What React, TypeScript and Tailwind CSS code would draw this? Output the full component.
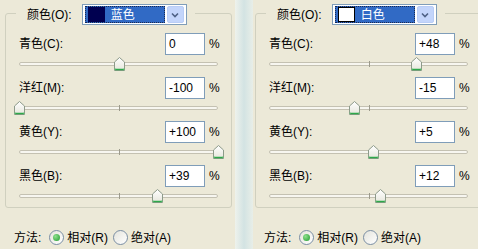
import React from 'react';

const FONT = '"Liberation Sans", "Noto Sans CJK SC", sans-serif';

interface Row {
  label: string;
  value: number;
}

interface PanelProps {
  colorName: string;
  swatch: string;
  rows: Row[];
  offset: string;
}

const fmt = (v: number) => (v > 0 ? `+${v}` : `${v}`);

function Thumb() {
  return (
    <svg width="11" height="14" viewBox="0 0 11 14" className="block">
      <defs>
        <linearGradient id="thumbFill" x1="0" y1="0" x2="0" y2="1">
          <stop offset="0" stopColor="#ffffff" />
          <stop offset="1" stopColor="#e6e6dc" />
        </linearGradient>
      </defs>
      <path d="M0.5 5 L5.5 0.5 L10.5 5 L10.5 13.5 L0.5 13.5 Z" fill="url(#thumbFill)" stroke="#8d9a8a" />
      <path d="M1 12.5 L10 12.5" stroke="#2ea84a" strokeWidth="1.5" />
      <path d="M1 11.5 L1 13 M10 11.5 L10 13" stroke="#6cc27a" strokeWidth="1" />
    </svg>
  );
}

function Slider({ value, tick }: { value: number; tick: boolean }) {
  const pos = ((value + 100) / 200) * 199;
  return (
    <div className="relative h-[14px] w-[210px] ml-[8px]">
      <div className="absolute left-[5px] top-[5px] h-[4px] w-[199px] rounded-full border border-[#c4c1b2] bg-[#f7f6f0]" />
      {tick && <div className="absolute left-[105px] top-[4px] h-[6px] w-px bg-[#9c9a8c]" />}
      <div className="absolute top-0" style={{ left: `${pos}px` }}>
        <Thumb />
      </div>
    </div>
  );
}

function Radio({ checked }: { checked: boolean }) {
  return (
    <span className="flex h-[15px] w-[15px] items-center justify-center rounded-full border border-[#7a8ea4] bg-linear-to-br from-[#e4e4dc] to-white">
      {checked && <span className="h-[7px] w-[7px] rounded-full bg-[radial-gradient(circle_at_35%_35%,#8ee08e,#1f9c2f)]" />}
    </span>
  );
}

function Panel({ colorName, swatch, rows, offset }: PanelProps) {
  return (
    <div className={`w-[235px] shrink-0 bg-[#ece9d8] pt-[13px] ${offset}`}>
      <div className="relative w-[227px] rounded-[3px] border border-[#d0d0bf] pt-[19px] pb-[4px]">
        <div className="absolute left-[10px] top-[-10px] flex items-center bg-[#ece9d8] pl-[11px] pr-[8px]">
          <span className="text-[12px] leading-[14px] text-black">颜色(O):</span>
          <div className="ml-[10px] flex h-[21px] w-[105px] items-center border border-[#7f9db9] bg-white px-[1px]">
            <div className="ml-[1px] flex h-[17px] w-[80px] items-center bg-[#316ac5] outline-1 outline-dotted outline-[#1a2a50] -outline-offset-1">
              <span className={`ml-[3px] h-[15px] w-[17px] ${swatch}`} />
              <span className="ml-[6px] text-[12px] leading-[14px] text-white">{colorName}</span>
            </div>
            <div className="ml-auto mr-[1px] flex h-[17px] w-[17px] items-center justify-center rounded-[2px] border border-[#b9cdf6] bg-[#c3d5fb]">
              <svg width="8" height="6" viewBox="0 0 8 6">
                <path d="M1 1.5 L4 4.5 L7 1.5" fill="none" stroke="#4d6185" strokeWidth="1.6" />
              </svg>
            </div>
          </div>
        </div>
        <div className="flex flex-col gap-[6px]">
          {rows.map((r, i) => (
            <div key={r.label} className="flex flex-col gap-[2px]">
              <div className="flex items-center">
                <span className="w-[159px] pl-[13px] text-[12px] leading-[14px] text-black">{r.label}</span>
                <div className="flex h-[22px] w-[40px] items-center border border-[#7f9db9] bg-white pl-[3px] text-[12px] text-black">
                  {fmt(r.value)}
                </div>
                <span className="ml-[4px] text-[12px] text-black">%</span>
              </div>
              <Slider value={r.value} tick={i > 0 || r.value !== 0} />
            </div>
          ))}
        </div>
      </div>
      <div className="mt-[22px] flex items-center text-[12px] leading-[14px] text-black">
        <span className="ml-[9px]">方法:</span>
        <span className="ml-[8px]">
          <Radio checked />
        </span>
        <span className="ml-[3px]">相对(R)</span>
        <span className="ml-[5px]">
          <Radio checked={false} />
        </span>
        <span className="ml-[3px]">绝对(A)</span>
      </div>
    </div>
  );
}

export default function App() {
  return (
    <div className="flex h-[249px] w-[478px] overflow-hidden bg-[#ece9d8]" style={{ fontFamily: FONT }}>
      <Panel
        colorName="蓝色"
        swatch="bg-[#000050]"
        offset="pl-[5px]"
        rows={[
          { label: '青色(C):', value: 0 },
          { label: '洋红(M):', value: -100 },
          { label: '黄色(Y):', value: 100 },
          { label: '黑色(B):', value: 39 },
        ]}
      />
      <div className="h-full w-[18px] shrink-0 bg-linear-to-r from-[#eef2ec] via-[#d3e3e3] to-[#e8eee8]" />
      <div className="flex-1 overflow-hidden">
        <Panel
          colorName="白色"
          swatch="bg-white border border-black"
          offset="pl-[2px]"
          rows={[
            { label: '青色(C):', value: 48 },
            { label: '洋红(M):', value: -15 },
            { label: '黄色(Y):', value: 5 },
            { label: '黑色(B):', value: 12 },
          ]}
        />
      </div>
    </div>
  );
}
